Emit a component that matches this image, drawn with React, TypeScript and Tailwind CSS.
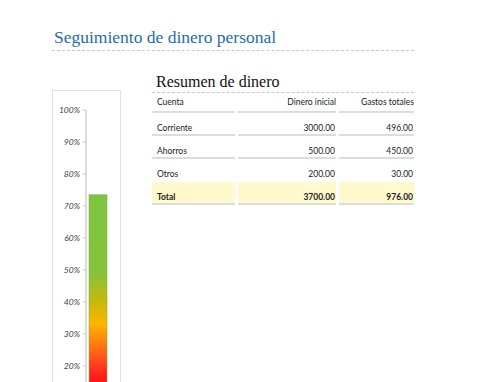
import React from "react";

interface Row {
  cuenta: string;
  inicial: string;
  gastos: string;
}

const rows: Row[] = [
  { cuenta: "Corriente", inicial: "3000.00", gastos: "496.00" },
  { cuenta: "Ahorros", inicial: "500.00", gastos: "450.00" },
  { cuenta: "Otros", inicial: "200.00", gastos: "30.00" },
];

const ticks = [100, 90, 80, 70, 60, 50, 40, 30, 20];

// small gauge chart, 0% sits under the visible area
const Gauge: React.FC = () => {
  const yFor = (p: number) => 19 + (100 - p) * 3.2;
  const barTop = yFor(73.5);
  return (
    <svg width="68" height="300" className="block">
      <defs>
        <linearGradient id="barGrad" x1="0" y1={barTop} x2="0" y2="300" gradientUnits="userSpaceOnUse">
          <stop offset="0" stopColor="#7ec540" />
          <stop offset="0.4" stopColor="#86c23a" />
          <stop offset="0.55" stopColor="#c9b90a" />
          <stop offset="0.66" stopColor="#ffb400" />
          <stop offset="0.8" stopColor="#ff6418" />
          <stop offset="0.93" stopColor="#ff1d1d" />
          <stop offset="1" stopColor="#ff1010" />
        </linearGradient>
      </defs>
      <line x1="33" y1={yFor(100)} x2="33" y2="300" stroke="#d0d0d0" strokeWidth="1.5" />
      {ticks.map((t) => (
        <g key={t}>
          <line x1="30" x2="33" y1={yFor(t)} y2={yFor(t)} stroke="#c8c8c8" strokeWidth="1" />
          <text
            x="27"
            y={yFor(t) + 3}
            textAnchor="end"
            fontSize="8.5"
            fontStyle="italic"
            fill="#404040"
            fontFamily="Lato, 'Liberation Sans', sans-serif"
          >
            {t}%
          </text>
        </g>
      ))}
      <rect x="36" y={barTop} width="18" height={300 - barTop} fill="url(#barGrad)" stroke="#6fb33a" strokeWidth="0.5" />
    </svg>
  );
};

const Cell: React.FC<{ children?: React.ReactNode; right?: boolean; bold?: boolean; yellow?: boolean; line?: boolean }> = ({
  children,
  right,
  bold,
  yellow,
  line = true,
}) => (
  <div
    className={`h-[23px] flex items-end pb-[2px] leading-none text-[8.5px] text-[#222] ${right ? "justify-end pr-[1px]" : "pl-[5px]"} ${
      bold ? "font-bold" : ""
    } ${yellow ? "bg-[#fff9cc]" : ""} ${line ? "border-b-2 border-[#dcdcdc]" : "border-b-2 border-transparent"}`}
  >
    {children}
  </div>
);

export default function App() {
  return (
    <div className="w-[498px] h-[382px] overflow-hidden bg-white pl-[52px] pt-[27px]">
      <div className="w-[362px] border-b border-dashed border-[#c8c8c8] pb-[3px]">
        <h1 className="pl-[2px] text-[17.5px] leading-[20px] text-[#1c6ea4]" style={{ fontFamily: "'Liberation Serif', serif" }}>
          Seguimiento de dinero personal
        </h1>
      </div>
      <div className="flex gap-[31px] mt-[21px]">
        <div className="w-[69px] h-[320px] mt-[18px] border border-[#e2e2e2] border-b-0">
          <Gauge />
        </div>
        <div className="w-[262px]" style={{ fontFamily: "Lato, 'Liberation Sans', sans-serif" }}>
          <div className="border-b border-dashed border-[#c8c8c8] pl-[4px] pb-[0px]">
            <h2 className="text-[16px] leading-[20px] text-[#111]" style={{ fontFamily: "'Liberation Serif', serif" }}>
              Resumen de dinero
            </h2>
          </div>
          <div className="grid grid-cols-[83px_98px_75px] gap-x-[3px]">
            <div className="h-[20px] flex items-center pl-[5px] text-[8.5px] text-[#222] border-b-2 border-[#dcdcdc]">Cuenta</div>
            <div className="h-[20px] flex items-center justify-end pr-[0px] text-[8.5px] text-[#222] border-b-2 border-[#dcdcdc]">
              Dinero inicial
            </div>
            <div className="h-[20px] flex items-center justify-end pr-[0px] text-[8.5px] text-[#222] border-b-2 border-[#dcdcdc]">
              Gastos totales
            </div>
            {rows.map((r, i) => (
              <React.Fragment key={r.cuenta}>
                <Cell line={i < 2}>{r.cuenta}</Cell>
                <Cell right line={i < 2}>
                  {r.inicial}
                </Cell>
                <Cell right line={i < 2}>
                  {r.gastos}
                </Cell>
              </React.Fragment>
            ))}
            <Cell bold yellow>
              Total
            </Cell>
            <Cell right bold yellow>
              3700.00
            </Cell>
            <Cell right bold yellow>
              976.00
            </Cell>
          </div>
        </div>
      </div>
    </div>
  );
}
